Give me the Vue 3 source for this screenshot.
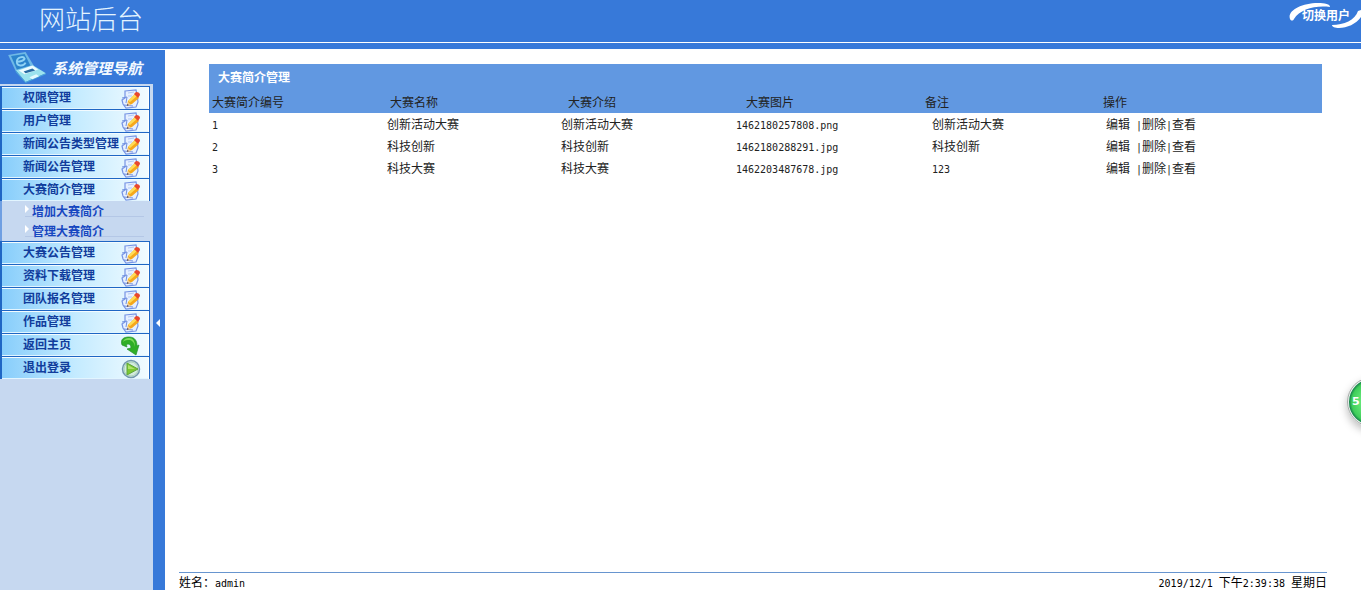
<script setup>
import { ref } from 'vue'

const menu = [
  { label: '权限管理', icon: 'edit' },
  { label: '用户管理', icon: 'edit' },
  { label: '新闻公告类型管理', icon: 'edit' },
  { label: '新闻公告管理', icon: 'edit' },
  { label: '大赛简介管理', icon: 'edit', children: ['增加大赛简介', '管理大赛简介'] },
  { label: '大赛公告管理', icon: 'edit' },
  { label: '资料下载管理', icon: 'edit' },
  { label: '团队报名管理', icon: 'edit' },
  { label: '作品管理', icon: 'edit' },
  { label: '返回主页', icon: 'back' },
  { label: '退出登录', icon: 'exit' }
]
const columns = ['大赛简介编号', '大赛名称', '大赛介绍', '大赛图片', '备注', '操作']
const rows = [
  { id: '1', name: '创新活动大赛', intro: '创新活动大赛', image: '1462180257808.png', note: '创新活动大赛' },
  { id: '2', name: '科技创新', intro: '科技创新', image: '1462180288291.jpg', note: '科技创新' },
  { id: '3', name: '科技大赛', intro: '科技大赛', image: '1462203487678.jpg', note: '123' }
]
const sidebarOpen = ref(true)
</script>

<template>
  <div class="page">
    <header class="top">
      <h1 class="brand">网站后台</h1>
      <a class="switch" href="#">
        <svg class="swoosh" viewBox="0 0 72 26" aria-hidden="true">
          <path d="M1 17C-2 9 12 1 29 1c7 0 12 1 12 4C27 3 11 7 5 17c-1 2-3 2-4 0z" fill="#fff" />
          <path d="M43 23c12 0 23-5 26-14l3-1v7c-5 7-14 11-22 11-4 0-7-1-7-3z" fill="#fff" />
        </svg>
        <span>切换用户</span>
      </a>
    </header>
    <div class="body">
      <aside v-show="sidebarOpen" class="side">
        <div class="side-title">
          <svg class="laptop" viewBox="0 0 40 32" aria-hidden="true">
            <path d="M0 3 18 0l9 15-19 5z" fill="#6fb9e6" />
            <path d="M3 4 17 2l6 12-14 4z" fill="#2b84cc" />
            <path d="M8 19 26 14l13 8-21 9z" fill="#9be3ee" />
            <path d="m8 19 10 12 21-9v1L18 32 8 21z" fill="#4ba8d8" />
            <path d="m11 19 14-5 6 4-14 5z" fill="#eefcff" />
            <path d="m16 20 9-3 3 2-10 3z" fill="#286ba3" />
            <path d="m22 26 7-3 3 2-7 3z" fill="#e3fbff" />
            <path d="M9 10c3 0 7-1 8-3-1-3-8-2-8 3 0 5 7 5 9 1" fill="none" stroke="#8fd2f5" stroke-width="2" />
          </svg>
          <h2>系统管理导航</h2>
        </div>
        <nav class="menu">
          <div v-for="item in menu" :key="item.label">
            <a class="item" href="#">
              <span>{{ item.label }}</span>
              <svg v-if="item.icon === 'edit'" class="icon" viewBox="0 0 20 20" aria-hidden="true">
                <path d="M4 2l11-1 1 4 1 8-2 5-10 1-3-4-1-4 3-2z" fill="#e6f0ff" stroke="#7794e4" stroke-width="1.2" />
                <path d="M1 9l5-1-1 6M3 16l9 1" fill="none" stroke="#6f8fe0" />
                <path d="M7 4l6-1M7 7h4" fill="none" stroke="#b3c9f4" />
                <path d="M6 17l1-5 7-7 4 4-7 6z" fill="#f5a81c" />
                <path d="M7 12l7-7 2 2-7 6z" fill="#ffdc55" />
                <path d="M13 5l2-2q4 0 4 3l-2 3z" fill="#e8482f" />
                <path d="M6 17l1-4 3 3z" fill="#f3cf9a" />
                <path d="M6 17v-2l2 1z" fill="#4a4a70" />
              </svg>
              <svg v-else-if="item.icon === 'back'" class="icon" viewBox="0 0 20 20" aria-hidden="true">
                <path d="M1 9C-1 3 3 1 8 1c6 0 8 4 8 9l2-1-3 10-9-6 4-1c0-2-1-4-3-4-1 0-2 1-1 3z" fill="#2fae27" stroke="#23902a" stroke-width=".7" />
                <path d="M2 6c1-3 3-4 6-4 4 0 6 3 6 9-1-5-3-7-6-7-2 0-4 0-6 2z" fill="#7edb5b" />
              </svg>
              <svg v-else class="icon" viewBox="0 0 20 20" aria-hidden="true">
                <circle cx="10" cy="10" r="8.5" fill="#d3ebdf" stroke="#7297ae" stroke-width="1.5" />
                <circle cx="10" cy="10" r="7" fill="none" stroke="#a8cfba" />
                <path d="M6 4l11 6-11 6z" fill="#7dc832" stroke="#5ea63a" />
                <path d="M7 6l7 4H7z" fill="#aee36a" />
              </svg>
            </a>
            <div v-if="item.children" class="children">
              <a v-for="child in item.children" :key="child" href="#">{{ child }}</a>
            </div>
          </div>
        </nav>
      </aside>
      <button class="splitter" type="button" aria-label="切换导航" @click="sidebarOpen = !sidebarOpen">
        <svg viewBox="0 0 4 8" aria-hidden="true"><path d="M4 0v8L0 4z" fill="#fff" /></svg>
      </button>
      <main class="main">
        <table class="grid">
          <caption>大赛简介管理</caption>
          <thead>
            <tr>
              <th v-for="c in columns" :key="c" scope="col">{{ c }}</th>
            </tr>
          </thead>
          <tbody>
            <tr v-for="r in rows" :key="r.id">
              <td><span class="latin">{{ r.id }}</span></td>
              <td>{{ r.name }}</td>
              <td>{{ r.intro }}</td>
              <td><span class="latin">{{ r.image }}</span></td>
              <td><span :class="{ latin: r.note === '123' }">{{ r.note }}</span></td>
              <td>
                <a href="#">编辑</a><span class="latin">&nbsp;|</span><a href="#">删除</a><span class="latin">|</span><a href="#">查看</a>
              </td>
            </tr>
          </tbody>
        </table>
        <footer class="foot">
          <span>姓名：<span class="latin">admin</span></span>
          <span><span class="latin">2019/12/1&nbsp;</span>下午<span class="latin">2:39:38&nbsp;</span>星期日</span>
        </footer>
      </main>
    </div>
    <div class="ball-clip"><button class="ball" type="button">5</button></div>
  </div>
</template>

<style>
body {
  margin: 0;
}
</style>

<style scoped>
.page {
  position: relative;
  display: flex;
  flex-direction: column;
  min-height: 100vh;
  background: #fff;
  color: #222;
  font: 12px/20px "Noto Sans CJK SC", sans-serif;
}
a {
  color: inherit;
  text-decoration: none;
}
h1,
h2 {
  margin: 0;
}
.latin {
  font-family: "DejaVu Sans Mono", monospace;
  font-size: 10px;
}
.top {
  display: flex;
  justify-content: space-between;
  height: 50px;
  box-sizing: border-box;
  padding-left: 39px;
  background: linear-gradient(#3779d9 0 42px, #fff 42px 43px, #3779d9 43px 49px, #fff 49px);
}
.brand {
  color: #e4f4ff;
  font-size: 26px;
  font-weight: 300;
  line-height: 35px;
}
.switch {
  position: relative;
  width: 72px;
  height: 26px;
  margin-top: 2px;
  color: #fff;
  font-weight: 700;
  line-height: 26px;
  text-indent: 13px;
}
.swoosh {
  position: absolute;
  inset: 0;
  width: 72px;
  height: 26px;
}
.switch span {
  position: relative;
}
.body {
  display: flex;
  flex: 1;
}
.side {
  width: 153px;
  background: #c6d8f0;
}
.side-title {
  display: flex;
  align-items: center;
  gap: 5px;
  height: 34px;
  padding-left: 8px;
  background: #3779d9;
}
.laptop {
  width: 39px;
  height: 31px;
}
.side-title h2 {
  color: #f4faff;
  font-family: "Noto Sans CJK SC", sans-serif;
  font-size: 15px;
  font-style: italic;
  font-weight: 700;
  line-height: 34px;
  padding-top: 2px;
  white-space: nowrap;
}
.menu {
  width: 150px;
  margin-top: 2px;
}
.item {
  display: flex;
  align-items: center;
  position: relative;
  box-sizing: border-box;
  height: 23px;
  padding: 0 0 2px 21px;
  border: solid #1f66c4;
  border-width: 1px 1px 0 2px;
  background: linear-gradient(90deg, #87cdfb, #c4ebff 50%, #f2fbff);
  box-shadow: inset 0 1px #f3fbff, inset -1px 0 #fff, inset 0 -1px #e2f5ff;
  color: #113d9c;
  font-weight: 700;
  white-space: nowrap;
}
.icon {
  position: absolute;
  right: 8px;
  top: 2px;
  width: 20px;
  height: 20px;
}
.children {
  padding-left: 23px;
  border-left: 2px solid #6f9fe2;
}
.children a {
  display: block;
  position: relative;
  height: 20px;
  padding-left: 7px;
  margin-right: 6px;
  background: linear-gradient(#b4c7e6, #b4c7e6) 0 15px / 100% 1px no-repeat;
  color: #1747c0;
  font-weight: 700;
}
.children a::before {
  content: "";
  position: absolute;
  left: 0;
  top: 4px;
  border: solid transparent;
  border-width: 4px 0 4px 4px;
  border-left-color: #fff;
}
.splitter {
  display: flex;
  align-items: center;
  justify-content: center;
  width: 12px;
  padding: 6px 2px 0 0;
  border: 0;
  background: #3779d9;
}
.splitter svg {
  width: 4px;
  height: 8px;
}
.main {
  display: flex;
  flex: 1;
  flex-direction: column;
  justify-content: space-between;
  padding: 14px 34px 0 14px;
}
.grid {
  display: block;
  margin: 0 5px 0 30px;
}
.grid caption {
  display: block;
  height: 27px;
  padding-left: 9px;
  background: #6198e1;
  color: #fff;
  font-weight: 700;
  line-height: 26px;
  text-align: left;
}
.grid thead,
.grid tbody {
  display: block;
}
.grid tr {
  display: grid;
  grid-template-columns: 175fr 174fr 175fr 196fr 174fr 216fr;
  padding-left: 3px;
  line-height: 22px;
}
.grid thead tr {
  grid-template-columns: 178fr 178fr 178fr 179fr 178fr 219fr;
  background: #6198e1;
}
.grid th,
.grid td {
  height: 22px;
  padding: 0;
  font-weight: 400;
  text-align: left;
  white-space: nowrap;
}
.foot {
  display: flex;
  justify-content: space-between;
  height: 17px;
  border-top: 1px solid #6795cf;
  color: #000;
  line-height: 18px;
}
.ball-clip {
  position: absolute;
  right: 0;
  top: 367px;
  width: 24px;
  height: 76px;
  overflow: hidden;
}
.ball {
  position: absolute;
  left: 10px;
  top: 10px;
  box-sizing: border-box;
  width: 50px;
  height: 50px;
  padding: 0 0 2px 3px;
  border: 2px solid #e6f1ec;
  border-radius: 50%;
  outline: 1px solid #aaa;
  outline-offset: -1px;
  background: radial-gradient(circle, #63e678 0 35%, #3fce59 62%, #16834a 70%);
  box-shadow: 0 4px 8px #0004;
  color: #fff;
  font: 700 11px "DejaVu Sans", sans-serif;
  text-align: left;
}
</style>
